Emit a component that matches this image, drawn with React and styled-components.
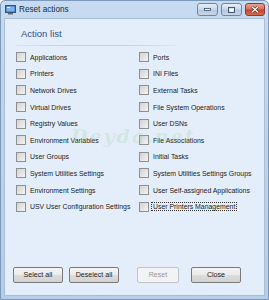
import React, { useState } from "react";
import styled, { createGlobalStyle } from "styled-components";

const GlobalStyle = createGlobalStyle`
  html, body {
    margin: 0;
    padding: 0;
    background: #ffffff;
  }
  body {
    font-family: "Liberation Sans", Arial, sans-serif;
  }
`;

const Frame = styled.div`
  width: 269px;
  height: 300px;
  box-sizing: border-box;
  display: flex;
  flex-direction: column;
  background: linear-gradient(180deg, #c6dbf1 0%, #bcd3ec 40%, #b5cde9 100%);
  border: 1px solid #7d98b8;
  border-radius: 5px 5px 0 0;
  overflow: hidden;
`;

const TitleBar = styled.div`
  height: 17px;
  display: flex;
  align-items: center;
  padding: 0 3px 0 4px;
  gap: 3px;
`;

const TitleText = styled.span`
  flex: 1;
  font-family: "Liberation Sans", Arial, sans-serif;
  font-size: 8.2px;
  color: #1d2a3a;
`;

const CaptionButton = styled.div`
  width: ${(p) => (p.$close ? 20 : 21)}px;
  height: 13px;
  box-sizing: border-box;
  border: 1px solid ${(p) => (p.$close ? "#8c3a30" : "#6d85a6")};
  border-radius: 3px;
  background: ${(p) =>
    p.$close
      ? "linear-gradient(180deg, #e8a493 0%, #d7705c 45%, #c8452c 55%, #d46a4f 100%)"
      : "linear-gradient(180deg, #e6eef8 0%, #cdd9e8 45%, #b7c7dc 55%, #c9d6e6 100%)"};
  display: flex;
  align-items: center;
  justify-content: center;
`;

const Client = styled.div`
  flex: 1;
  margin: 0 3px 3px 3px;
  background: #e4eefb;
  border: 1px solid #a9bfd8;
  display: flex;
  flex-direction: column;
  position: relative;
`;

const Header = styled.div`
  padding: 9px 0 0 16px;
  font-family: "Liberation Sans", Arial, sans-serif;
  font-size: 9.5px;
  color: #2f4f8f;
  height: 14px;
`;

const Rule = styled.div`
  margin: 3px 0 0 10px;
  width: 162px;
  height: 1px;
  background: linear-gradient(90deg, rgba(190, 205, 225, 0.3), #c3d1e2 30%, #c3d1e2 70%, rgba(190, 205, 225, 0.2));
`;

const Grid = styled.div`
  display: grid;
  grid-template-columns: 123px 123px;
  grid-auto-flow: column;
  grid-template-rows: repeat(10, 16.6px);
  padding: 3px 0 0 11px;
`;

const Item = styled.label`
  display: flex;
  align-items: center;
  gap: 2px;
  font-family: "Liberation Sans", Arial, sans-serif;
  font-size: 6.9px;
  color: #1a1a1a;
  white-space: nowrap;
`;

const Box = styled.span`
  width: 10px;
  height: 10px;
  flex: none;
  box-sizing: border-box;
  border: 1px solid #8e8f8f;
  background: linear-gradient(135deg, #d3d3d3 0%, #e6e6e6 60%, #f4f4f4 100%);
  display: flex;
  align-items: center;
  justify-content: center;
  font-size: 8px;
  line-height: 1;
  color: #1c3f7a;
`;

const Label = styled.span`
  padding: 0 1px;
  border: 1px dotted ${(p) => (p.$focus ? "#333" : "transparent")};
`;

const Watermark = styled.div`
  position: absolute;
  left: 66px;
  top: 106px;
  font-family: "DejaVu Serif", serif;
  font-weight: bold;
  font-style: italic;
  font-size: 19px;
  letter-spacing: 2px;
  color: rgba(150, 205, 140, 0.22);
  pointer-events: none;
`;

const Buttons = styled.div`
  margin-top: auto;
  display: flex;
  align-items: center;
  padding: 0 0 12px 8px;
`;

const Button = styled.div`
  width: ${(p) => p.$w}px;
  height: 16px;
  box-sizing: border-box;
  margin-left: ${(p) => p.$ml}px;
  border: 1px solid ${(p) => (p.disabled ? "#bfc4c8" : "#7a7a7a")};
  border-radius: 2px;
  background: ${(p) =>
    p.disabled
      ? "#f1f3f5"
      : "linear-gradient(180deg, #f4f4f4 0%, #ebebeb 48%, #dddddd 52%, #d1d1d1 100%)"};
  display: flex;
  align-items: center;
  justify-content: center;
  font-family: "Liberation Sans", Arial, sans-serif;
  font-size: 7.1px;
  color: ${(p) => (p.disabled ? "#9a9a9a" : "#1a1a1a")};
  cursor: default;
`;

const actions = [
  "Applications",
  "Printers",
  "Network Drives",
  "Virtual Drives",
  "Registry Values",
  "Environment Variables",
  "User Groups",
  "System Utilities Settings",
  "Environment Settings",
  "USV User Configuration Settings",
  "Ports",
  "INI Files",
  "External Tasks",
  "File System Operations",
  "User DSNs",
  "File Associations",
  "Initial Tasks",
  "System Utilities Settings Groups",
  "User Self-assigned Applications",
  "User Printers Management",
];

function AppIcon() {
  return (
    <svg width="11" height="10" viewBox="0 0 11 10">
      <rect x="0.5" y="0.5" width="10" height="7" fill="#3b6fb6" stroke="#3c4f6b" />
      <rect x="1.5" y="1.5" width="8" height="5" fill="#7fb2e8" />
      <rect x="2" y="2" width="3" height="1" fill="#e8f2ff" />
      <rect x="3" y="8" width="5" height="1.5" fill="#5a6c84" />
    </svg>
  );
}

export default function App() {
  const [checked, setChecked] = useState({});

  const toggle = (name) =>
    setChecked((prev) => ({ ...prev, [name]: !prev[name] }));

  const setAll = (value) => {
    const next = {};
    actions.forEach((a) => (next[a] = value));
    setChecked(next);
  };

  const anyChecked = actions.some((a) => checked[a]);

  return (
    <>
      <GlobalStyle />
      <Frame>
        <TitleBar>
          <AppIcon />
          <TitleText>Reset actions</TitleText>
          <CaptionButton>
            <svg width="7" height="3" viewBox="0 0 7 3">
              <rect x="0.5" y="0.5" width="6" height="2" fill="#fff" stroke="#35506f" strokeWidth="0.8" />
            </svg>
          </CaptionButton>
          <CaptionButton>
            <svg width="7" height="6" viewBox="0 0 7 6">
              <rect x="0.5" y="0.5" width="6" height="5" fill="none" stroke="#35506f" strokeWidth="0.9" />
              <rect x="1.5" y="1.8" width="4" height="2.8" fill="#fff" />
            </svg>
          </CaptionButton>
          <CaptionButton $close>
            <svg width="8" height="7" viewBox="0 0 8 7">
              <path d="M1 0.8 L7 6.2 M7 0.8 L1 6.2" stroke="#4a1a12" strokeWidth="2.4" />
              <path d="M1 0.8 L7 6.2 M7 0.8 L1 6.2" stroke="#ffffff" strokeWidth="1.4" />
            </svg>
          </CaptionButton>
        </TitleBar>
        <Client>
          <Header>Action list</Header>
          <Rule />
          <Grid>
            {actions.map((a) => (
              <Item key={a} onClick={() => toggle(a)}>
                <Box>{checked[a] ? "✓" : ""}</Box>
                <Label $focus={a === "User Printers Management"}>{a}</Label>
              </Item>
            ))}
          </Grid>
          <Watermark>Deyda.net</Watermark>
          <Buttons>
            <Button $w={50} $ml={0} onClick={() => setAll(true)}>
              Select all
            </Button>
            <Button $w={50} $ml={6} onClick={() => setAll(false)}>
              Deselect all
            </Button>
            <Button $w={42} $ml={18} disabled={!anyChecked}>
              Reset
            </Button>
            <Button $w={50} $ml={12}>
              Close
            </Button>
          </Buttons>
        </Client>
      </Frame>
    </>
  );
}
